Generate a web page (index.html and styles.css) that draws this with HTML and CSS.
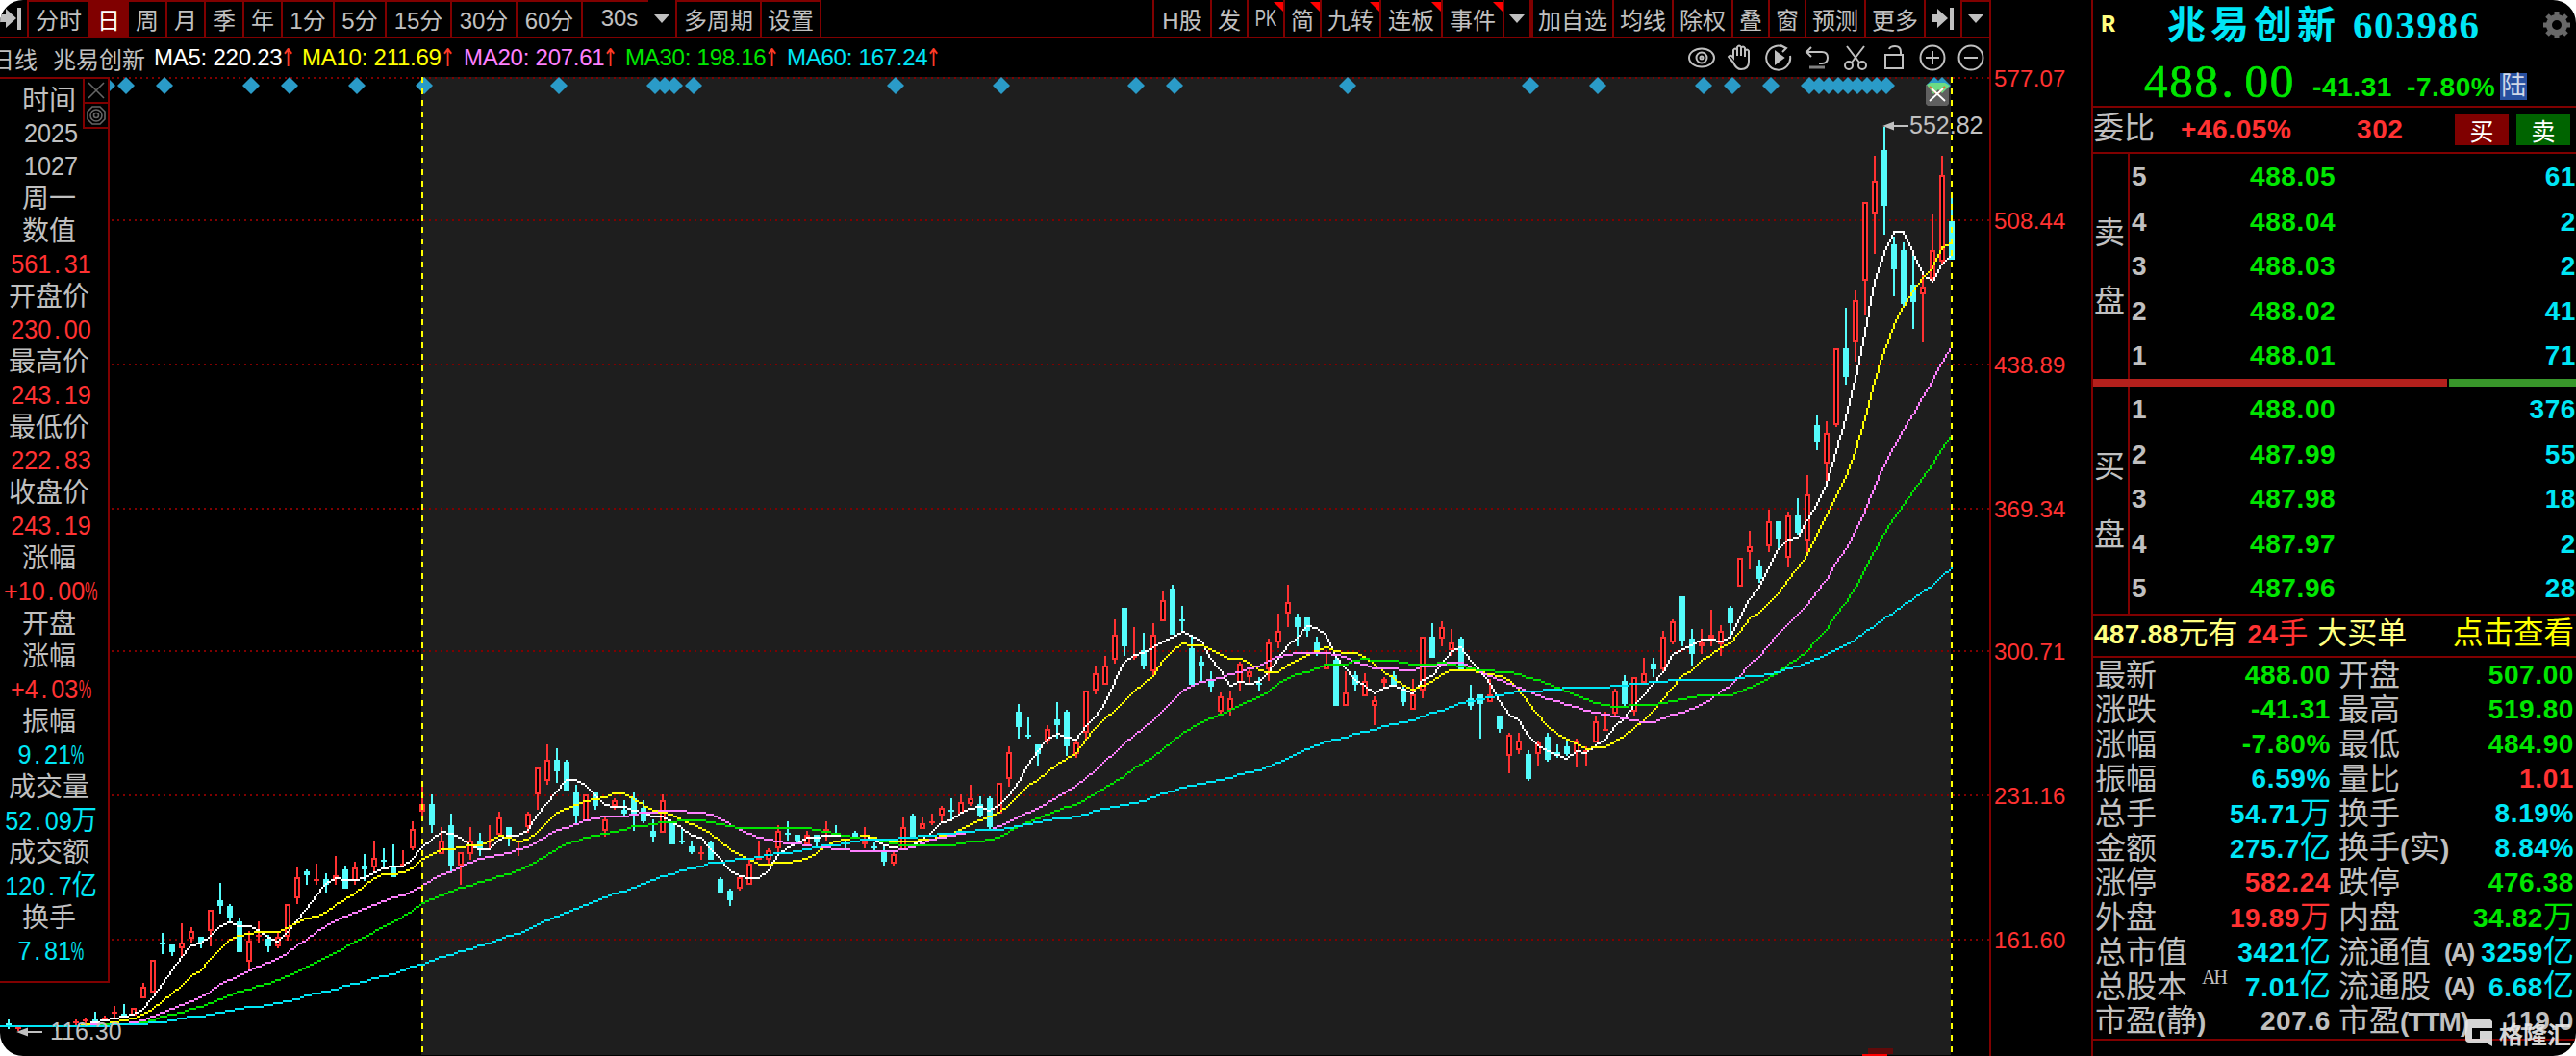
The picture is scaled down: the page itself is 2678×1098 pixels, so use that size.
FILE: index.html
```html
<!DOCTYPE html>
<html lang="zh-CN">
<head>
<meta charset="utf-8">
<title>兆易创新 603986</title>
<link rel="stylesheet" href="styles.css">
</head>
<body>
<div class="app">
  <main class="main">
    <nav class="toolbar">
      <div class="group">
        <span class="cell w28 first"><svg width="28" height="36" viewBox="0 0 28 36"><path d="M0 14h6V8l11 10L6 28v-6H0z" fill="#c0c0c0"/><path d="M20 7v23" stroke="#c0c0c0" stroke-width="4"/></svg></span>
        <span class="cell top w64">分时</span><span class="cell top w40 on">日</span><span class="cell top w40">周</span><span class="cell top w40">月</span><span class="cell top w40">季</span><span class="cell top w40">年</span><span class="cell top w54">1分</span><span class="cell top w54">5分</span><span class="cell top w68">15分</span><span class="cell top w68">30分</span><span class="cell top w68">60分</span><span class="cell top w70 sec">30s</span><span class="cell w28 first"><i class="down"></i></span><span class="cell top w88">多周期</span><span class="cell top w64 last">设置</span>
      </div>
      <div class="group">
        <span class="cell w60">H股</span><span class="cell w38">发</span><span class="cell w38 hot"><span class="pk">PK</span></span><span class="cell w38 hot">简</span><span class="cell w62 hot">九转</span><span class="cell w64 hot">连板</span><span class="cell w64 hot">事件</span><span class="cell w28"><i class="down"></i></span><span class="cell w86 thick">加自选</span><span class="cell w62">均线</span><span class="cell w62">除权</span><span class="cell w38">叠</span><span class="cell w38">窗</span><span class="cell w62">预测</span><span class="cell w62">更多</span><span class="cell w38"><svg width="28" height="36" viewBox="0 0 28 36"><path d="M3 14h5V8l11 10L8 28v-6H3z" fill="#c0c0c0"/><path d="M23 7v23" stroke="#c0c0c0" stroke-width="4"/></svg></span><span class="cell w32 top last"><i class="down"></i></span>
      </div>
    </nav>

    <div class="legend">
      <span class="period">日线</span><span class="stock">兆易创新</span>
      <span class="ma ma5">MA5: 220.23<i>↑</i></span><span class="ma ma10">MA10: 211.69<i>↑</i></span><span class="ma ma20">MA20: 207.61<i>↑</i></span><span class="ma ma30">MA30: 198.16<i>↑</i></span><span class="ma ma60">MA60: 167.24<i>↑</i></span>
      <div class="tools">
        <svg viewBox="0 0 28 28"><ellipse cx="14" cy="14" rx="13" ry="9.5"/><circle cx="14" cy="14" r="5.5"/><circle cx="14" cy="14" r="1.5"/></svg>
        <svg viewBox="0 0 28 28"><path d="M7 19L2 13q2-3 5 1V6q2-3 4 0v6V3q2-3 4 0v9V4q2-3 4 0v9V7q2-3 4 0v11q0 8-8 8-5 0-8-7z"/></svg>
        <svg viewBox="0 0 28 28"><path d="M21 4a12.5 12.5 0 1 0 5 8M16 1l6 3-4 4"/><path d="M11 8v12l8-6z" fill="#c0c0c0"/></svg>
        <svg viewBox="0 0 28 28"><path d="M8 3L3 8l5 5M3 8h16q6 0 6 6t-6 6h-3"/><path d="M6 24h16" stroke="#808080" stroke-width="3"/></svg>
        <svg viewBox="0 0 28 28"><path d="M5 2l13 17M23 2L10 19"/><circle cx="7" cy="22" r="4"/><circle cx="21" cy="22" r="4"/></svg>
        <svg viewBox="0 0 28 28"><path d="M5 11h18v14H5zM9 5q1-3 6-3 6 0 6 6v3"/></svg>
        <svg viewBox="0 0 28 28"><circle cx="14" cy="14" r="12.5"/><path d="M14 7v14M7 14h14"/></svg>
        <svg viewBox="0 0 28 28"><circle cx="14" cy="14" r="12.5"/><path d="M7 14h14"/></svg>
      </div>
    </div>

    <div class="plot">
      <svg id="chart" width="2174" height="1018" viewBox="0 80 2174 1018"></svg>
      <aside class="info">
        <div class="info-btns">
          <span><svg width="20" height="20" viewBox="0 0 20 20"><path d="M2 2l16 16M18 2L2 18"/></svg></span>
          <span><svg width="22" height="22" viewBox="0 0 22 22"><path d="M7 2h8l5 5v8l-5 5H7l-5-5V7z"/><circle cx="11" cy="11" r="6"/><circle cx="11" cy="11" r="2.5"/></svg></span>
        </div>
        <p>时间</p><p class="n">2025</p><p class="n">1027</p><p>周一</p><p>数值</p><p class="n red">561<b>.</b>31</p>
        <p>开盘价</p><p class="n red">230<b>.</b>00</p><p>最高价</p><p class="n red">243<b>.</b>19</p>
        <p>最低价</p><p class="n red">222<b>.</b>83</p><p>收盘价</p><p class="n red">243<b>.</b>19</p>
        <p>涨幅</p><p class="n red">+10<b>.</b>00<s>%</s></p><p>开盘</p><p>涨幅</p><p class="n red">+4<b>.</b>03<s>%</s></p>
        <p>振幅</p><p class="n cyan">9<b>.</b>21<s>%</s></p><p>成交量</p><p class="n cyan">52<b>.</b>09<u>万</u></p>
        <p>成交额</p><p class="n cyan">120<b>.</b>7<u>亿</u></p><p>换手</p><p class="n cyan">7<b>.</b>81<s>%</s></p>
      </aside>
    </div>
  </main>

  <section class="quote">
    <header class="head">
      <div class="title">
        <span class="flag">R</span><span class="name">兆易创新</span><span class="code">603986</span>
        <svg class="gear" width="30" height="30" viewBox="-15 -15 30 30"><circle r="8" fill="none" stroke="#686868" stroke-width="6"/><path d="M0-14V-9M0 14V9M-14 0h5M14 0H9M-10-10l4 4M10 10l-4-4M-10 10l4-4M10-10l-4 4" stroke="#686868" stroke-width="5"/></svg>
      </div>
      <div class="price">
        <span class="big">488<b>.</b>00</span><span class="diff">-41.31</span><span class="pct">-7.80%</span><span class="badge">陆</span>
      </div>
    </header>
    <div class="ratio"><span class="k">委比</span><span class="a">+46.05%</span><span class="b">302</span><button class="buy">买</button><button class="sell">卖</button></div>
    <div class="book">
      <div class="side"><span>卖</span><span>盘</span></div>
      <ul>
        <li><span>5</span><span>488.05</span><span>61</span></li>
        <li><span>4</span><span>488.04</span><span>2</span></li>
        <li><span>3</span><span>488.03</span><span>2</span></li>
        <li><span>2</span><span>488.02</span><span>41</span></li>
        <li><span>1</span><span>488.01</span><span>71</span></li>
      </ul>
    </div>
    <div class="balance"><i></i><i></i></div>
    <div class="book bids">
      <div class="side"><span>买</span><span>盘</span></div>
      <ul>
        <li><span>1</span><span>488.00</span><span>376</span></li>
        <li><span>2</span><span>487.99</span><span>55</span></li>
        <li><span>3</span><span>487.98</span><span>18</span></li>
        <li><span>4</span><span>487.97</span><span>2</span></li>
        <li><span>5</span><span>487.96</span><span>28</span></li>
      </ul>
    </div>
    <div class="notice"><span><b>487.88</b>元有</span><span class="red"><b>24</b>手</span><span>大买单</span><a>点击查看</a></div>
    <div class="stats">
      <div><span>最新</span><b class="green">488.00</b></div><div><span>开盘</span><b class="green">507.00</b></div>
      <div><span>涨跌</span><b class="green">-41.31</b></div><div><span>最高</span><b class="green">519.80</b></div>
      <div><span>涨幅</span><b class="green">-7.80%</b></div><div><span>最低</span><b class="green">484.90</b></div>
      <div><span>振幅</span><b class="cyan">6.59%</b></div><div><span>量比</span><b class="red">1.01</b></div>
      <div><span>总手</span><b class="cyan">54.71<em>万</em></b></div><div><span>换手</span><b class="cyan">8.19%</b></div>
      <div><span>金额</span><b class="cyan">275.7<em>亿</em></b></div><div><span>换手<b>(</b>实<b>)</b></span><b class="cyan">8.84%</b></div>
      <div><span>涨停</span><b class="red">582.24</b></div><div><span>跌停</span><b class="green">476.38</b></div>
      <div><span>外盘</span><b class="red">19.89<em>万</em></b></div><div><span>内盘</span><b class="green">34.82<em>万</em></b></div>
      <div><span>总市值</span><b class="cyan">3421<em>亿</em></b></div><div><span>流通值</span><small>(A)</small><b class="cyan">3259<em>亿</em></b></div>
      <div><span>总股本<sup>AH</sup></span><b class="cyan">7.01<em>亿</em></b></div><div><span>流通股</span><small>(A)</small><b class="cyan">6.68<em>亿</em></b></div>
      <div><span>市盈<b>(</b>静<b>)</b></span><b>207.6</b></div><div><span>市盈<b class="ttm">(TTM)</b></span><b>119.0</b></div>
    </div>
    <div class="mark"><svg width="30" height="30" viewBox="0 0 30 30"><path d="M29 3V10H8v11h8v-8h13v16l-7-4H5q-4 0-4-4V5q0-4 4-4h22z" fill="#e8e8e8"/></svg><span>格隆汇</span></div>
  </section>
</div>
<script src="chart.js"></script>
</body>
</html>
```
FILE: styles.css
```css
* { box-sizing: border-box; }
body { margin: 0; background: #fff; }
p, ul { margin: 0; padding: 0; list-style: none; }
i, em, s, u { font-style: normal; text-decoration: none; }

.app {
  width: 2678px; height: 1098px; display: flex; overflow: hidden;
  background: #000; color: #c0c0c0; border-radius: 24px;
  font-family: "Liberation Sans", "Noto Sans CJK SC", sans-serif;
  white-space: nowrap;
}
.red { color: #ff3232; }
.green { color: #00e600; }
.cyan { color: #00e6f6; }

.main { width: 2174px; flex: none; display: flex; flex-direction: column; }

/* toolbar */
.toolbar { width: 2070px; height: 40px; display: flex; justify-content: space-between; border-bottom: 2px solid #800000; font-size: 24px; }
.group { display: flex; }
.cell { display: flex; align-items: center; justify-content: center; height: 38px; border-left: 2px solid #800000; position: relative; }
.cell.first { border-left: 0; }
.cell.last { border-right: 2px solid #800000; }
.cell.thick { border-left-width: 4px; }
.cell.top { box-shadow: inset 0 2px #800000; }
.cell.on { background: #800000; color: #fff; }
.cell.sec { padding-left: 8px; }
.pk { transform: scaleX(.7); }
.hot::after { content: ""; position: absolute; right: 0; top: 2px; border-top: 10px solid #f00; border-left: 10px solid transparent; }
.down { flex: none; width: 16px; height: 9px; border: 8px solid transparent; border-top: 9px solid #c0c0c0; border-bottom: 0; }
.w28 { width: 28px; } .w32 { width: 32px; } .w38 { width: 38px; } .w40 { width: 40px; } .w54 { width: 54px; }
.w60 { width: 60px; } .w62 { width: 62px; } .w64 { width: 64px; } .w68 { width: 68px; } .w70 { width: 70px; }
.w86 { width: 86px; } .w88 { width: 88px; }

/* moving-average legend */
.legend { width: 2068px; height: 40px; display: flex; align-items: center; font-size: 24px; }
.period { margin-left: -9px; width: 64px; }
.stock { width: 105px; }
.ma { width: 168px; display: flex; letter-spacing: -0.25px; }
.ma i { color: #ff3c28; margin-left: -4px; font: 26px/28px "DejaVu Sans", sans-serif; width: 18px; transform: scaleX(.75); }
.ma5 { width: 154px; color: #fff; }
.ma10 { color: #ff0; }
.ma20 { color: #ff80ff; }
.ma30 { color: #00e600; }
.ma60 { color: #00e6f6; }
.tools { margin-left: auto; margin-right: 5px; display: flex; gap: 12px; }
.tools svg { width: 28px; height: 28px; fill: none; stroke: #c0c0c0; stroke-width: 2; }

/* plot */
.plot { flex: 1; position: relative; }
.plot > svg { display: block; overflow: visible; }
.axis { fill: #ff3232; font-size: 24px; letter-spacing: .2px; }
.tag { fill: #c0c0c0; font-size: 25px; }
.info {
  position: absolute; left: 0; top: 0; width: 114px; height: 942px; padding: 6px 6px 0 0;
  background: #000; border: solid #800000; border-width: 2px 2px 2px 0;
  font-size: 28px; text-align: center;
}
.info p { height: 34px; line-height: 34px; margin: 0 -7px 0 -7px; }
.info p:not(.n) { padding-right: 4px; }
.n { transform: scaleX(.9); }
.n b { display: inline-block; width: 15px; font-weight: normal; text-align: left; padding-left: 3px; }
.n s { display: inline-block; width: 15px; transform: scaleX(.6); transform-origin: 0 0; }
.n u { font-size: 29px; }
.info-btns { position: absolute; right: 0; top: 0; width: 26px; border-left: 2px solid #800000; }
.info-btns span { display: flex; height: 26px; align-items: center; justify-content: center; border-bottom: 2px solid #800000; }
.info-btns svg { fill: none; stroke: #666; stroke-width: 1.6; }

/* quote panel */
.quote { width: 504px; flex: none; border-left: 2px solid #800000; position: relative; }
.quote b, .diff, .pct, .ratio .a, .ratio .b, .book li { font-weight: bold; font-size: 28px; letter-spacing: .6px; }
.head { height: 112px; border-bottom: 2px solid #800000; }
.title { height: 52px; display: flex; align-items: center; color: #00e6f6; }
.flag { width: 77px; padding-left: 8px; font: bold 25px "Liberation Mono", monospace; color: #ffff80; }
.name { width: 193px; font-size: 40px; font-weight: 700; letter-spacing: 5px; line-height: 50px; }
.code { font: bold 41px "Liberation Serif", serif; letter-spacing: 1.6px; }
.gear { margin-left: auto; margin-right: 5px; }
.price { height: 58px; display: flex; color: #00e600; align-items: flex-end; }
.big { width: 175px; margin-left: 53px; font: 49px/51px "Liberation Serif", serif; letter-spacing: 1.7px; -webkit-text-stroke: .7px #00e600; }
.big b { display: inline-block; width: 26px; font: inherit; padding-left: 2px; }
.diff, .pct { line-height: 39px; }
.diff { width: 98px; }
.badge { margin: 0 0 6px 5px; width: 28px; height: 28px; background: #2850a0; color: #d0d8e8; font-size: 26px; line-height: 27px; text-align: center; }
.ratio { height: 48px; display: flex; align-items: center; border-bottom: 2px solid #800000; color: #ff3232; }
.ratio .k { font-size: 32px; color: #c0c0c0; width: 91px; line-height: 44px; padding-bottom: 4px; }
.ratio .a { width: 183px; }
.ratio .b { width: 102px; }
.ratio button { width: 56px; height: 32px; padding: 0; border: 0; color: #fff; font: 25px/30px "Noto Sans CJK SC", sans-serif; }
.ratio .buy { background: #800000; margin-right: 8px; }
.ratio .sell { background: #006400; margin-right: 6px; margin-left: auto; }
.ratio .buy { margin-left: auto; }
.ratio .sell { margin-left: 0; }
.book { display: flex; height: 234px; }
.book.bids { height: 236px; }
.side { width: 38px; border-right: 2px solid #800000; font-size: 32px; display: flex; flex-direction: column; align-items: center; gap: 24px; justify-content: center; padding: 2px 2px 0 0; line-height: 47px; }
.book ul { flex: 1; }
.book li { display: grid; grid-template-columns: 125px 1fr auto; height: 46.6px; line-height: 48px; }
.book li span:nth-child(1) { padding-left: 2px; }
.book li span:nth-child(2) { color: #00e600; }
.book li span:nth-child(3) { color: #00e6f6; }
.balance { height: 8px; display: flex; gap: 2px; }
.balance i { width: 368px; background: #b4201c; }
.balance i + i { flex: 1; background: #38962a; }
.notice { height: 46px; border: solid #800000; border-width: 2px 0; display: flex; align-items: center; gap: 10px; padding: 0 2px 5px 1px; font-size: 31px; line-height: 37px; color: #ffff80; }
.notice b { letter-spacing: .3px; }
.notice .red { color: #ff3232; }
.notice a { margin-left: auto; color: #ff0; font-size: 31.5px; }
.stats { height: 398px; display: grid; grid-template-columns: 244px 244px; column-gap: 9px; padding-left: 3px; border-bottom: 2px solid #800000; grid-auto-rows: 36px; font-size: 32px; line-height: 36px; }
.stats div { display: flex; position: relative; align-items: center; }
.stats div > b { margin-left: auto; }
.stats em { font-size: 32px; font-weight: normal; letter-spacing: 0; }
.stats span { margin-left: -1px; }
.stats span b { color: #c0c0c0; }
.stats .ttm { letter-spacing: -1px; }
.stats small { margin-left: 14px; font-size: 26px; font-weight: bold; letter-spacing: -2px; }
.stats sup { position: absolute; left: 110px; top: -4px; font: 20px/24px "Liberation Serif", serif; letter-spacing: -2px; }
.mark { position: absolute; left: 386px; top: 1059px; display: flex; gap: 6px; color: #e8e8e8; font: bold 25px/30px "Noto Sans CJK SC", sans-serif; opacity: .92; }
```
FILE: chart.js
```js
const NS = "http://www.w3.org/2000/svg";
const chart = document.getElementById("chart");

// Candle rows: direction, high, body top, body bottom, low.
// Values are thirds of a pixel below the block's own top edge.
const blocks = [
  { top: 580, rows: `d 1440 1452 1464 1470;u 1455 1458 1470 1475;d 1458 1460 1464 1466;u 1455 1460 1464 1466;u 1458 1460 1464 1466;d 1456 1460 1466 1476;u 1455 1458 1462 1466;
u 1442 1446 1452 1456;u 1435 1440 1446 1452;d 1415 1437 1447 1452;u 1428 1434 1447 1447;u 1398 1415 1423 1435;d 1392 1420 1427 1435;u 1405 1405 1425 1425;u 1327 1340 1372 1372;u 1255 1255 1355 1355;
d 1170 1200 1206 1236;d 1206 1206 1230 1242;u 1140 1200 1217 1242;u 1152 1164 1186 1200;d 1182 1182 1200 1217;u 1098 1098 1164 1212;d 1014 1068 1086 1110;d 1080 1086 1122 1134;d 1122 1134 1230 1230;
u 1164 1194 1260 1284;u 1134 1175 1181 1200;d 1176 1188 1212 1230;u 1170 1182 1210 1218;u 1080 1080 1182 1194;u 966 996 1062 1080;d 972 978 990 1020;u 954 1002 1008 1020;d 984 1002 1020 1044;
u 930 990 1002 1020;d 960 972 1032 1032;u 948 966 1006 1020;d 924 960 972 1008;u 882 936 966 984;d 906 942 948 972;d 894 960 996 996;u 912 956 961 961;u 822 846 906 912` },
  { top: 740, rows: `u 235 289 310 324;d 258 289 353 377;u 360 402 442 442;d 318 353 480 498;u 438 438 480 540;u 360 402 442 462;d 378 402 432 450;u 353 401 406 432;u 312 330 384 390;d 360 360 384 420;
u 402 402 410 450;u 312 318 362 378;u 174 174 258 306;u 102 150 216 228;d 114 150 186 222;d 150 156 245 245;d 228 252 324 348;u 258 258 342 342;d 252 252 294 306;u 324 336 372 390;
u 270 275 294 306;d 275 306 318 330;d 252 270 318 372;d 276 300 342 348;d 336 372 390 408;u 258 276 377 377;d 342 348 413 413;d 360 402 407 413;d 402 420 438 444;u 420 437 446 462;
d 402 408 462 462;d 516 522 563 563;d 552 558 588 606;u 510 516 552 558;u 462 474 538 538;u 402 455 461 461;u 426 432 462 474;u 354 372 426 444;d 342 378 384 402;d 384 384 402 408;
u 372 384 414 420;d 384 384 408 418;u 342 366 372 402;d 354 378 384 384;d 396 398 403 426;d 372 378 390 390;u 360 404 412 426;d 408 418 424 432;d 418 432 468 480;u 440 442 474 480;
u 330 360 432 432;d 318 324 390 396;u 330 348 366 366;u 318 341 347 354;u 294 300 324 348;d 270 306 311 336;u 258 282 318 318` },
  { top: 580, rows: `u 708 750 767 773;d 744 768 804 810;d 744 750 840 846;u 702 702 798 798;u 588 606 690 714;d 456 480 528 564;d 498 552 558 564;d 582 582 612 648;u 522 534 570 582;d 450 504 522 564;
d 474 480 588 618;u 570 576 612 624;u 414 414 546 570;u 336 360 412 426;u 306 336 396 396;u 192 240 318 330;d 156 156 276 306;u 216 306 312 318;d 234 288 336 348;u 204 240 354 366;
u 102 132 197 197;d 84 96 240 240;d 150 192 198 228;d 246 282 396 396;d 306 324 336 384;d 354 378 402 420;u 420 432 480 492;u 414 438 474 492;u 324 330 390 414;u 342 354 372 390;
d 372 387 393 414;u 252 264 348 384;u 174 228 264 282;u 84 138 174 216;d 174 186 216 276;d 186 186 228 246;d 246 264 294 306;u 288 330 348 348;d 312 318 462 462;u 354 420 461 461;
d 354 366 396 414;u 360 384 431 431;u 432 444 461 522;u 372 378 390 408;d 354 366 402 402;d 396 414 450 462;u 378 426 473 473;u 246 246 414 438;d 204 246 312 312;u 198 216 252 276;
u 222 264 288 306;d 246 252 346 346;d 396 438 462 474;d 426 426 456 564;u 378 426 449 449;d 492 492 534 546;u 546 552 618 672;u 546 570 600 612` },
  { top: 440, rows: `d 1020 1032 1110 1116;u 990 996 1032 1068;d 966 978 1050 1056;d 1002 1026 1038 1044;d 990 1008 1032 1038;u 984 990 1026 1074;u 1008 1020 1026 1068;u 912 930 996 996;u 900 954 959 959;u 828 834 906 918;
d 786 804 876 882;u 792 792 900 912;u 732 780 810 810;d 732 750 768 792;u 648 666 768 774;u 612 618 684 690;d 540 540 678 696;d 642 672 720 756;u 642 684 696 720;u 582 660 672 696;
u 630 648 690 726;d 570 576 624 660;u 420 420 509 509;u 336 384 402 456;d 426 444 486 498;u 270 306 384 402;d 306 306 360 390;u 276 288 420 450;d 234 288 342 348;u 162 222 366 402` },
  { top: 40, rows: `d 1176 1206 1260 1284;u 1194 1230 1326 1380;u 966 966 1206 1212;d 840 966 1056 1080;u 786 816 948 1008;u 510 510 756 864;u 366 444 546 672;d 276 348 522 612;d 618 642 720 804;d 636 660 828 834;
d 678 768 822 906;u 738 774 798 948;u 546 660 750 756;u 366 426 696 702;d 498 570 690 690` }
];

const snap = v => Math.round(v / 6) * 2;
const candles = [];
for (const b of blocks) {
  for (const row of b.rows.split(";")) {
    const [dir, ...v] = row.trim().split(" ");
    const [high, top, bottom, low] = v.map(n => b.top + snap(+n));
    candles.push({ up: dir === "u", x: 9 + 10 * candles.length, high, top, bottom, low,
      close: dir === "u" ? b.top + v[1] / 3 : b.top + v[2] / 3 });
  }
}

function add(tag, attrs, text) {
  const el = document.createElementNS(NS, tag);
  for (const k in attrs) el.setAttribute(k, attrs[k]);
  if (text) el.textContent = text;
  chart.appendChild(el);
  return el;
}
const rect = (x, y, width, height, fill) => add("rect", { x, y, width, height, fill });

// selected range
rect(438, 80, 1590, 1017, "#1e1e1e");

// price grid and axis
const axis = [[81, "577.07"], [229, "508.44"], [379, "438.89"], [529, "369.34"], [677, "300.71"], [827, "231.16"], [977, "161.60"]];
axis.forEach(([y, label]) => {
  add("path", { d: `M116 ${y}H2068`, stroke: "#800000", "stroke-width": 2, "stroke-dasharray": "2 4", "shape-rendering": "crispEdges" });
  add("text", { x: 2073, y: y + 9, class: "axis" }, label);
});
rect(2068, 40, 2, 1058, "#800000");

// candles
for (const c of candles) {
  const color = c.up ? "#ff3232" : "#54fcfc";
  rect(c.x - 1, c.high, 2, Math.max(2, c.low - c.high), color);
  const h = Math.max(2, c.bottom - c.top);
  rect(c.x - 3, c.top, 6, h, color);
  if (c.up && h > 4) rect(c.x - 1, c.top + 2, 2, h - 4, "#000");
}

// moving averages, drawn as stepped two-pixel runs
const closes = Array(60).fill(1066.5).concat(candles.map(c => c.close));
function average(i, n) {
  let s = 0;
  for (let k = 0; k < n; k++) s += closes[60 + i - k];
  return s / n;
}
function movingAverage(n, color) {
  let d = "";
  const cell = v => Math.round((v - 1) / 2);
  for (let i = 0; i < candles.length; i++) {
    let x0 = i ? cell(candles[i - 1].x) : 0, y0 = cell(average(Math.max(i - 1, 0), n));
    const x1 = cell(candles[i].x), y1 = cell(average(i, n));
    const dx = x1 - x0, dy = Math.abs(y1 - y0), sy = y0 < y1 ? 1 : -1;
    let err = dx - dy;
    for (;;) {
      d += `M${x0 * 2} ${y0 * 2}h2v2h-2z`;
      if (x0 === x1 && y0 === y1) break;
      const e2 = 2 * err;
      if (e2 > -dy) { err -= dy; x0++; }
      if (e2 < dx) { err += dx; y0 += sy; }
    }
  }
  add("path", { d, fill: color, "shape-rendering": "crispEdges" });
}
movingAverage(5, "#ffffff");
movingAverage(10, "#ffff00");
movingAverage(20, "#ff80ff");
movingAverage(30, "#00e600");
movingAverage(60, "#00e6f6");

// event markers
const events = [111, 131, 171, 261, 301, 371, 441, 581, 681, 691, 701, 721, 931, 1041, 1181, 1221, 1401, 1591, 1661, 1771, 1801, 1841,
  1881, 1891, 1901, 1911, 1921, 1931, 1941, 1951, 1961, 2011, 2019];
for (const x of events) add("path", { d: `M${x} 80l9 9l-9 9l-9-9z`, fill: "#2a9bc8" });

// close handle of the selected range
add("path", { d: "M2002 88h24v20l-2 2h-20l-2-2z", fill: "#606060" });
add("path", { d: "M2003 88l4-2h15l5 3-8 8-4-4-5 5z", fill: "#6cdc84" });
add("path", { d: "M2006 90l8 8 8-8", fill: "none", stroke: "#e86830", "stroke-width": 2 });
add("path", { d: "M2006 105l14-13M2008 92l14 13", stroke: "#fff", "stroke-width": 1.8 });

// range edges
for (const x of [439, 2029]) {
  add("path", { d: `M${x} 80V1096`, stroke: "#ffff00", "stroke-width": 2, "stroke-dasharray": "6 6", "shape-rendering": "crispEdges" });
}

// extremes
add("path", { d: "M1960 131h24M1968 128l-8 3 8 3z", stroke: "#c0c0c0", "stroke-width": 2, fill: "#c0c0c0" });
add("text", { x: 1985, y: 139, class: "tag" }, "552.82");
add("path", { d: "M22 1073h22M28 1070l-8 3 8 3z", stroke: "#c0c0c0", "stroke-width": 2, fill: "#c0c0c0" });
add("text", { x: 52, y: 1081, class: "tag" }, "116.30");

// tip of the volume pane marker
rect(1942, 1090, 26, 6, "#600a0a");
rect(1936, 1096, 26, 2, "#ff0000");
```
